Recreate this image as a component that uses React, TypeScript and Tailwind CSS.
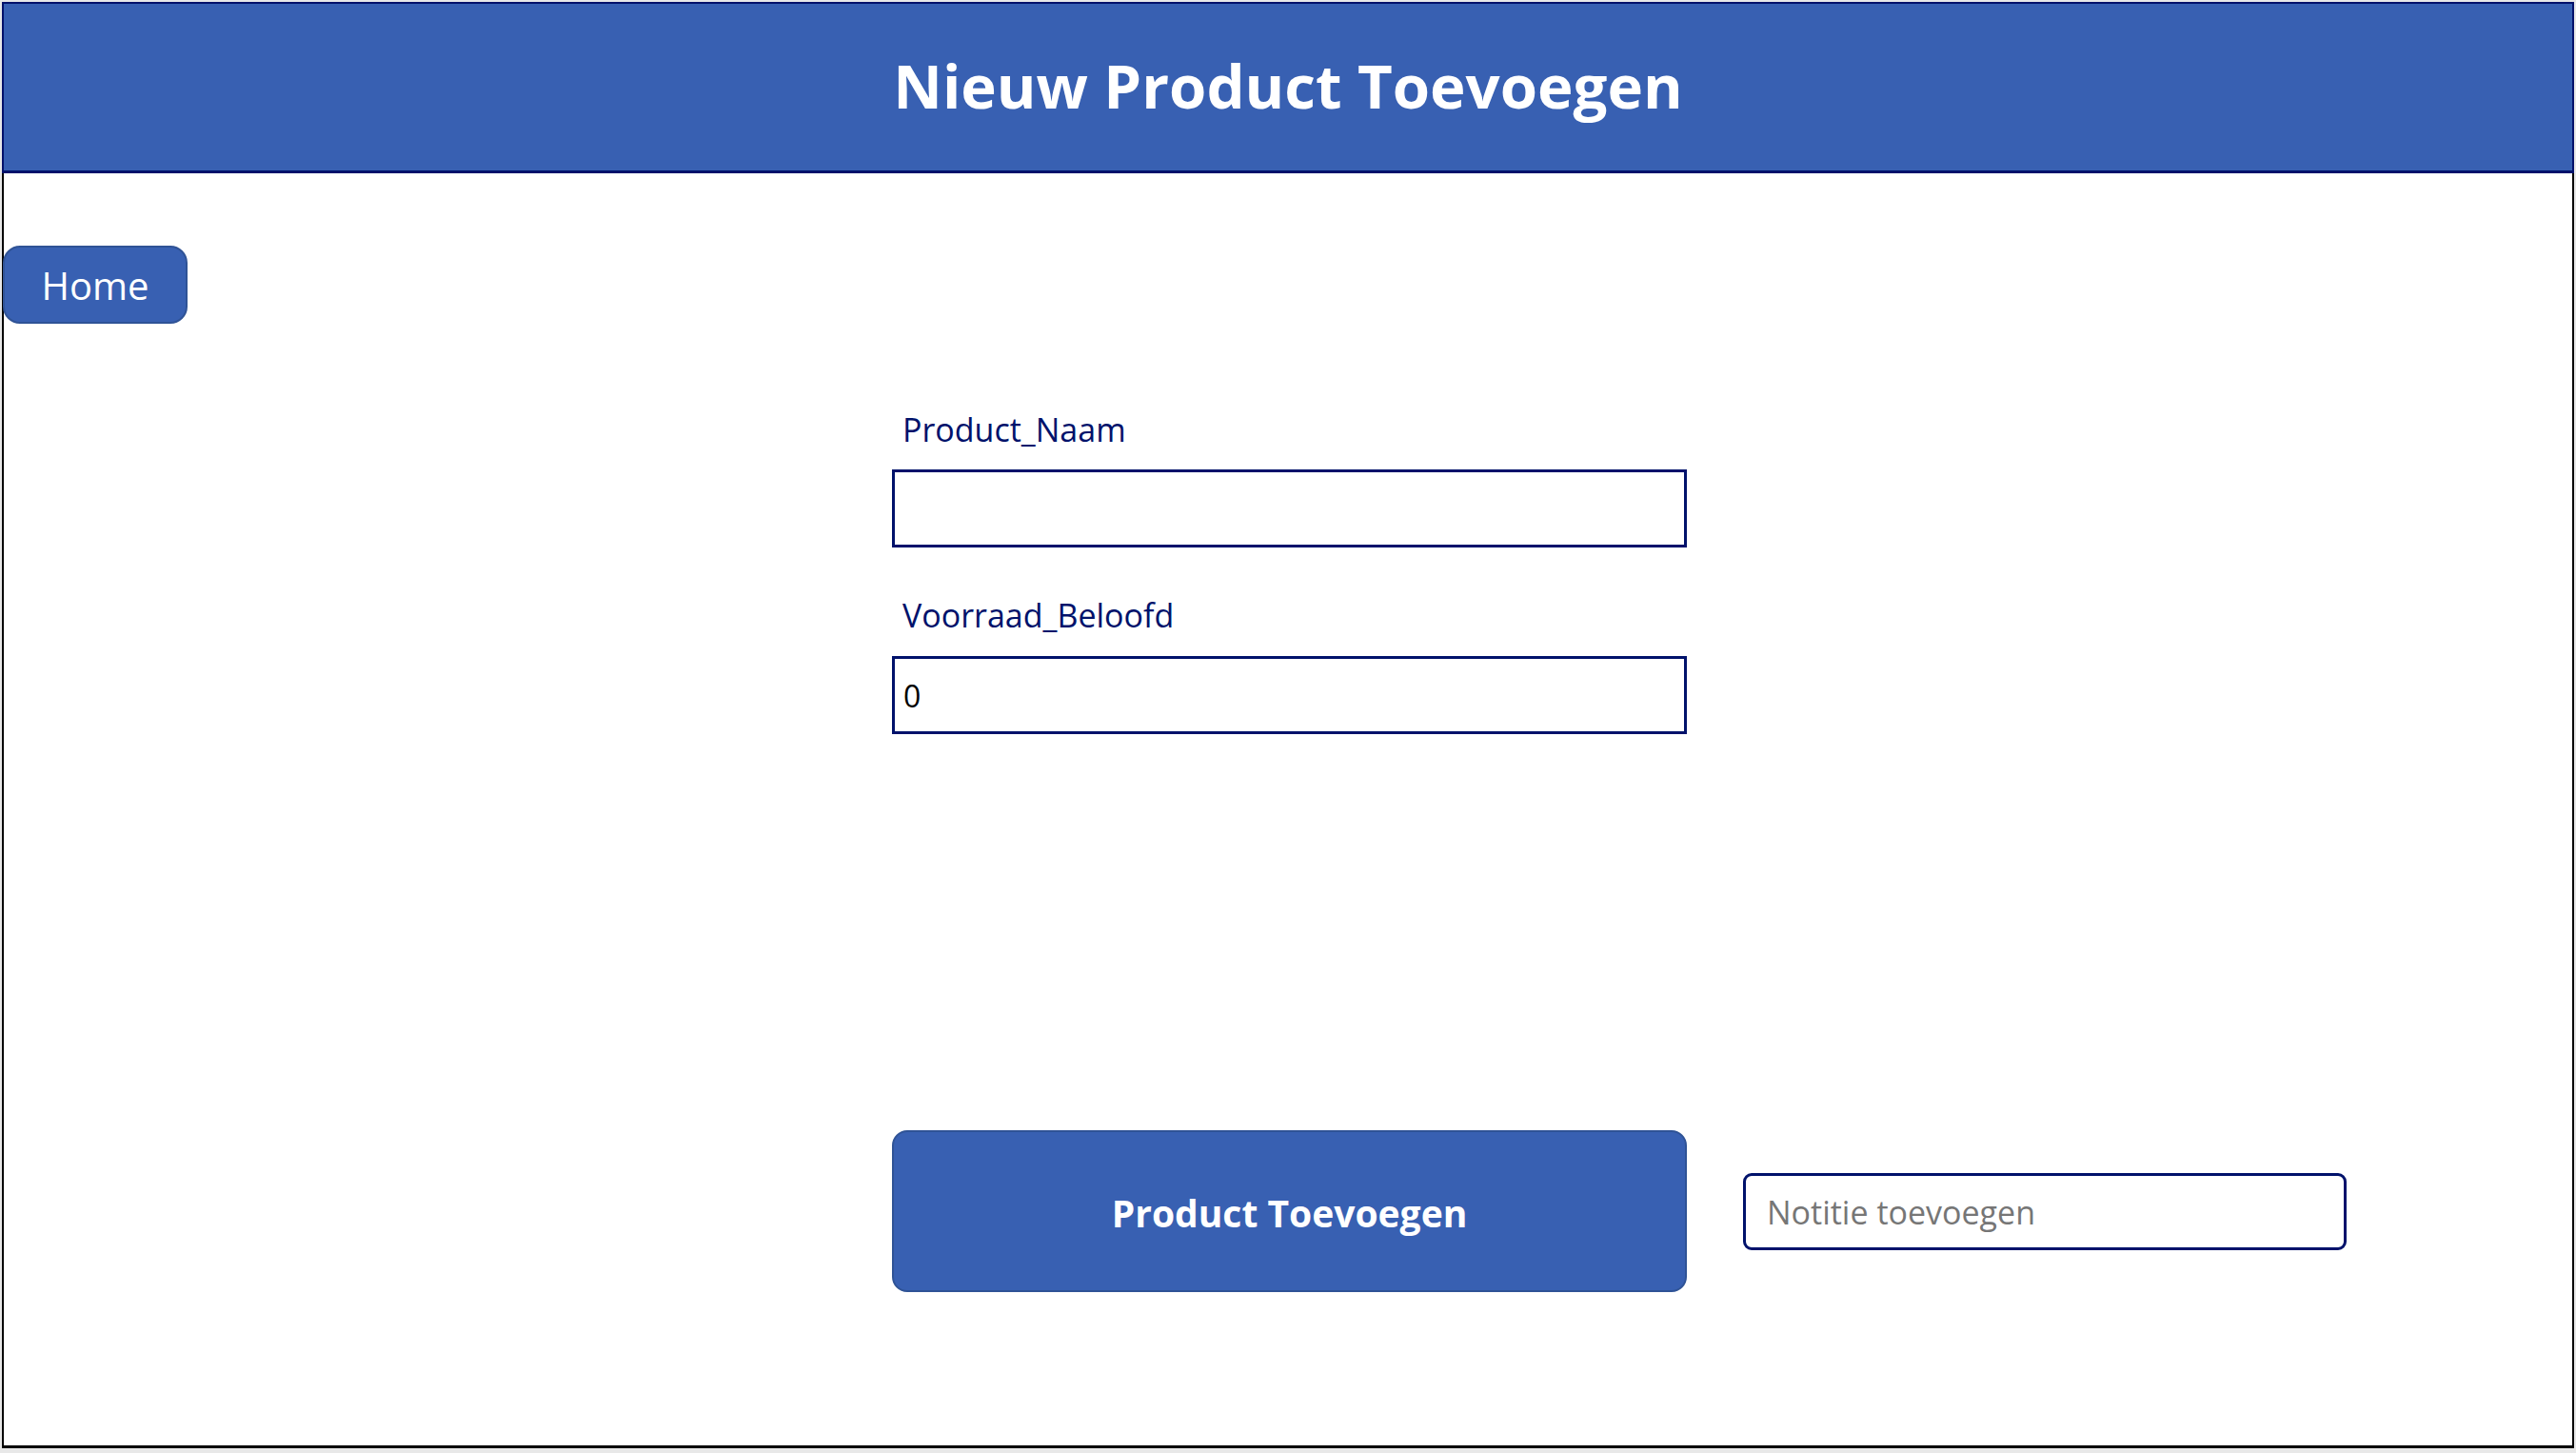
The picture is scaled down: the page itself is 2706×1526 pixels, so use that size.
import React from "react";

const font = { fontFamily: '"Open Sans", "Noto Sans", sans-serif' };

const FieldLabel = ({ children }: { children: React.ReactNode }) => (
  <div className="pl-[11px] text-[34px] leading-[46px] text-[#00126B]">{children}</div>
);

export default function App() {
  return (
    <div className="w-[2706px] h-[1526px] bg-[#e8e8e8] pt-[2px] pl-[2px]" style={font}>
      <div className="w-[2702px] h-[1519px] flex flex-col bg-white">
        <header className="h-[180px] shrink-0 flex items-center justify-center bg-[#3860B2] border-x-2 border-t-2 border-b-[3px] border-[#00126B]">
          <h1 className="text-[63.5px] font-bold text-white leading-none pb-[4px]">
            Nieuw Product Toevoegen
          </h1>
        </header>

        <main className="flex-1 flex flex-col border-x-2 border-b-[3px] border-black">
          <div className="mt-[76px]">
            <button className="w-[194px] h-[82px] -ml-px rounded-[18px] bg-[#3860B2] border-2 border-[#2F5396] text-white text-[40px] leading-none pt-[2px]">
              Home
            </button>
          </div>

          <div className="ml-[933px] w-[835px] mt-[88px] flex flex-col">
            <FieldLabel>Product_Naam</FieldLabel>
            <div className="mt-[19px] h-[82px] border-[3px] border-[#00126B] bg-white" />

            <div className="mt-[48px]">
              <FieldLabel>Voorraad_Beloofd</FieldLabel>
            </div>
            <div className="mt-[20px] h-[82px] border-[3px] border-[#00126B] bg-white flex items-center pl-[9px] pt-[2px] text-[32px] text-black">
              0
            </div>
          </div>

          <div className="ml-[933px] mt-[416px] flex items-center gap-[59px]">
            <button className="w-[835px] h-[170px] rounded-[16px] bg-[#3860B2] border-2 border-[#2F5396] text-white text-[39px] font-bold leading-none pt-[2px]">
              Product Toevoegen
            </button>
            <div className="w-[634px] h-[81px] rounded-[9px] border-[3px] border-[#00126B] bg-white flex items-center pl-[22px] pt-[2px] text-[34px] text-[#767676]">
              Notitie toevoegen
            </div>
          </div>
        </main>
      </div>
    </div>
  );
}
